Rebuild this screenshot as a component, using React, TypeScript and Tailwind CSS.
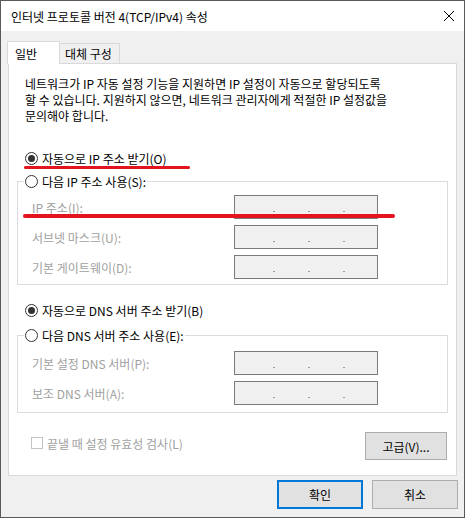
import React from 'react'

function Radio({ checked }: { checked?: boolean }) {
  return (
    <span className="w-[13px] h-[13px] rounded-full border border-[#333] bg-white flex items-center justify-center shrink-0">
      {checked && <span className="w-[7px] h-[7px] rounded-full bg-[#333]" />}
    </span>
  )
}

function IpRow({ label }: { label: string }) {
  return (
    <div className="flex items-center h-[24px]">
      <span className="w-[202px] text-[#a0a0a0]">{label}</span>
      <div className="w-[144px] h-[24px] border border-[#7a7a7a] bg-[#f0f0f0] flex items-end pb-[6px] pl-[38px] gap-[33px]">
        <span className="w-[2px] h-[1px] bg-[#9a9a9a]" />
        <span className="w-[2px] h-[1px] bg-[#9a9a9a]" />
        <span className="w-[2px] h-[1px] bg-[#9a9a9a]" />
      </div>
    </div>
  )
}

export default function App() {
  return (
    <div className="relative w-[465px] h-[518px] border border-[#5a5a5a] bg-[#f0f0f0] flex flex-col text-[12px] leading-[15px] text-black font-['Noto_Sans_CJK_KR',sans-serif]">
      {/* Title bar */}
      <div className="h-[30px] bg-white flex items-center justify-between pl-[10px] pr-[8px] shrink-0">
        <span>인터넷 프로토콜 버전 4(TCP/IPv4) 속성</span>
        <svg width="12" height="12" viewBox="0 0 12 12" className="mr-[1px]">
          <path d="M1 1 L11 11 M11 1 L1 11" stroke="#000" strokeWidth="1" />
        </svg>
      </div>

      <div className="px-[7px] pt-[9px] flex flex-col">
        {/* Tabs */}
        <div className="flex items-end h-[23px]">
          <div className="-ml-[1px] w-[53px] h-[23px] border border-b-0 border-[#d9d9d9] bg-white relative z-10 -mb-px pl-[7px] flex items-center">
            일반
          </div>
          <div className="-ml-[1px] w-[61px] h-[20px] border border-b-0 border-[#d9d9d9] bg-[#f0f0f0] pl-[5px] flex items-center">
            대체 구성
          </div>
        </div>

        {/* Panel */}
        <div className="h-[413px] border border-[#d9d9d9] bg-white flex flex-col">
          <p className="pt-[12px] pl-[16px] pr-[10px] leading-[16px]">
            네트워크가 IP 자동 설정 기능을 지원하면 IP 설정이 자동으로 할당되도록
            <br />
            할 수 있습니다. 지원하지 않으면, 네트워크 관리자에게 적절한 IP 설정값을
            <br />
            문의해야 합니다.
          </p>

          <label className="mt-[26px] ml-[16px] flex items-center gap-[4px] h-[16px]">
            <Radio checked />
            <span>자동으로 IP 주소 받기(O)</span>
          </label>

          <fieldset className="mt-[7px] mx-[8px] border border-[#dcdcdc]">
            <legend className="ml-[6px] px-[1px] flex items-center gap-[4px] h-[16px] bg-white">
              <Radio />
              <span>다음 IP 주소 사용(S):</span>
            </legend>
            <div className="pl-[14px] pt-[6px] pb-[5px] flex flex-col gap-[6px]">
              <IpRow label="IP 주소(I):" />
              <IpRow label="서브넷 마스크(U):" />
              <IpRow label="기본 게이트웨이(D):" />
            </div>
          </fieldset>

          <label className="mt-[17px] ml-[16px] flex items-center gap-[4px] h-[16px]">
            <Radio checked />
            <span>자동으로 DNS 서버 주소 받기(B)</span>
          </label>

          <fieldset className="mt-[9px] mx-[8px] border border-[#dcdcdc]">
            <legend className="ml-[6px] px-[1px] flex items-center gap-[4px] h-[16px] bg-white">
              <Radio />
              <span>다음 DNS 서버 주소 사용(E):</span>
            </legend>
            <div className="pl-[14px] pt-[8px] pb-[7px] flex flex-col gap-[6px]">
              <IpRow label="기본 설정 DNS 서버(P):" />
              <IpRow label="보조 DNS 서버(A):" />
            </div>
          </fieldset>

          <div className="mt-[19px] ml-[22px] mr-[9px] flex justify-between items-start">
            <label className="mt-[3px] flex items-center gap-[4px] h-[16px] text-[#a0a0a0]">
              <span className="w-[12px] h-[12px] border border-[#c4c4c4] bg-white" />
              <span>끝낼 때 설정 유효성 검사(L)</span>
            </label>
            <button className="w-[82px] h-[28px] border border-[#adadad] bg-[#e1e1e1]">
              고급(V)...
            </button>
          </div>
        </div>

        {/* Dialog buttons */}
        <div className="mt-[4px] -mr-px flex justify-end gap-[9px]">
          <button className="w-[86px] h-[29px] border-2 border-[#0078d7] bg-[#e1e1e1]">확인</button>
          <button className="w-[86px] h-[29px] border border-[#adadad] bg-[#e1e1e1]">취소</button>
        </div>
      </div>

      {/* Red annotation strokes */}
      <div className="absolute left-[23px] top-[165px] w-[166px] h-[3px] rounded-full bg-[#e3141e]" />
      <div className="absolute left-[22px] top-[213px] w-[372px] h-[4px] rounded-full bg-[#e3141e]" />
    </div>
  )
}
